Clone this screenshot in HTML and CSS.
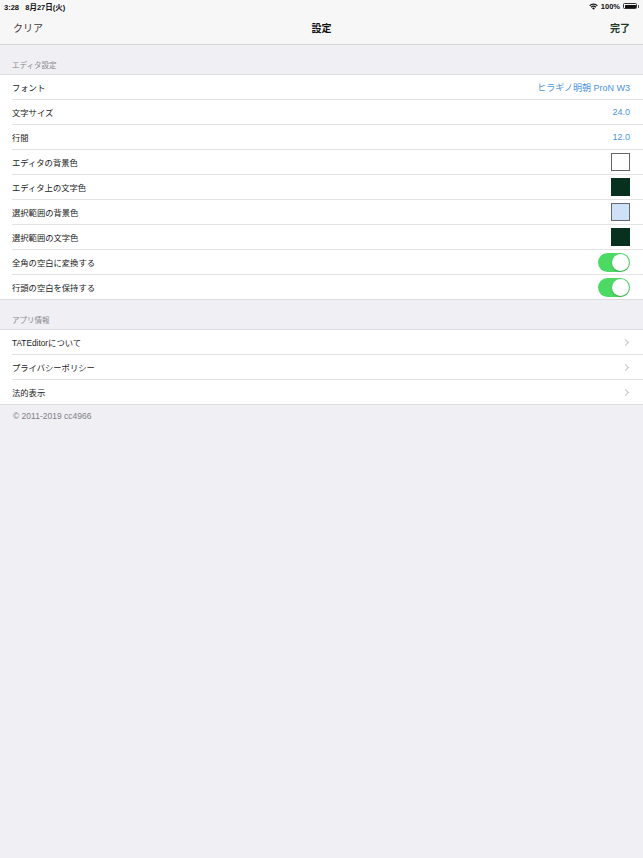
FILE: index.html
```html
<!DOCTYPE html>
<html lang="ja">
<head>
<meta charset="utf-8">
<link rel="stylesheet" href="styles.css">
</head>
<body>
<div class="top">
  <div class="status">
    <span class="time">3:28&nbsp;&nbsp;&nbsp;8月27日(火)</span>
    <span class="status-right">
      <svg class="wifi" width="9" height="7" viewBox="0 0 18 14"><path d="M9 13.5 L6.2 10.5 A4 4 0 0 1 11.8 10.5 Z" fill="#111"/><path d="M3.4 7.6 A8 8 0 0 1 14.6 7.6 L13 9.3 A5.6 5.6 0 0 0 5 9.3 Z" fill="#111"/><path d="M0.5 4.6 A12.2 12.2 0 0 1 17.5 4.6 L15.9 6.3 A9.8 9.8 0 0 0 2.1 6.3 Z" fill="#111"/></svg>
      <span class="pct">100%</span>
      <span class="battery"><span class="battery-fill"></span></span><span class="battery-tip"></span>
    </span>
  </div>
  <div class="nav">
    <span class="nav-left">クリア</span>
    <span class="nav-title">設定</span>
    <span class="nav-right">完了</span>
  </div>
</div>

<div class="section-header">エディタ設定</div>
<div class="group">
  <div class="row"><span class="label">フォント</span><span class="value">ヒラギノ明朝 ProN W3</span></div>
  <div class="row"><span class="label">文字サイズ</span><span class="value">24.0</span></div>
  <div class="row"><span class="label">行間</span><span class="value">12.0</span></div>
  <div class="row"><span class="label">エディタの背景色</span><span class="swatch sw-white"></span></div>
  <div class="row"><span class="label">エディタ上の文字色</span><span class="swatch sw-dark"></span></div>
  <div class="row"><span class="label">選択範囲の背景色</span><span class="swatch sw-blue"></span></div>
  <div class="row"><span class="label">選択範囲の文字色</span><span class="swatch sw-dark"></span></div>
  <div class="row"><span class="label">全角の空白に変換する</span><span class="toggle"><span class="knob"></span></span></div>
  <div class="row last"><span class="label">行頭の空白を保持する</span><span class="toggle"><span class="knob"></span></span></div>
</div>

<div class="section-header">アプリ情報</div>
<div class="group">
  <div class="row"><span class="label">TATEditorについて</span><span class="chev"></span></div>
  <div class="row"><span class="label">プライバシーポリシー</span><span class="chev"></span></div>
  <div class="row last"><span class="label">法的表示</span><span class="chev"></span></div>
</div>
<div class="footer">© 2011-2019 cc4966</div>
</body>
</html>
```

FILE: styles.css
```css
* { box-sizing: border-box; }
html, body {
  margin: 0;
  padding: 0;
  background: #efeff4;
  font-family: "Liberation Sans", "Noto Sans CJK JP", sans-serif;
  color: #1c1c1c;
}
body { width: 643px; min-height: 858px; }

.top {
  background: #f7f7f7;
  border-bottom: 1px solid #d4d4d6;
  height: 45px;
}
.status {
  height: 12px;
  display: flex;
  align-items: center;
  justify-content: space-between;
  padding: 0 4px 0 4px;
  font-size: 7.5px;
  font-weight: bold;
  color: #111;
}
.status-right { display: flex; align-items: center; gap: 2px; }
.wifi { display: block; margin-right: 1px; }
.pct { font-size: 7.5px; }
.battery {
  width: 14px;
  height: 6px;
  border: 1px solid #333;
  border-radius: 1.5px;
  padding: 0.5px;
  display: flex;
  margin-left: 1px;
}
.battery-fill { flex: 1; background: #111; border-radius: 0.5px; }
.battery-tip { width: 1px; height: 3px; background: #555; margin-left: -1px; }

.nav {
  height: 32px;
  display: flex;
  align-items: center;
  justify-content: space-between;
  padding: 0 13px 2px 13px;
  font-size: 10px;
}
.nav-left { color: #3a3a3a; width: 60px; }
.nav-title { font-weight: bold; color: #111; }
.nav-right { color: #1e3b2c; font-weight: bold; width: 60px; text-align: right; }

.section-header {
  height: 29px;
  padding: 0 12px 4px 12px;
  font-size: 7.5px;
  color: #8a8a8f;
  display: flex;
  align-items: flex-end;
}

.group {
  background: #fff;
  border-top: 1px solid #dcdce0;
  border-bottom: 1px solid #dcdce0;
}
.row {
  height: 25px;
  margin-left: 12px;
  padding-right: 13px;
  display: flex;
  align-items: center;
  justify-content: space-between;
  border-bottom: 1px solid #e3e3e6;
  font-size: 8.3px;
}
.row.last { border-bottom: none; height: 24px; }
.label { color: #222; }
.value { color: #4a94dc; font-size: 9px; }

.swatch {
  width: 19px;
  height: 18px;
  border: 1px solid #4c4c4c;
}
.sw-white { background: #fff; border-color: #666; }
.sw-dark { background: #08301f; border-color: #08301f; }
.sw-blue { background: #cfe1f6; border-color: #667; }

.toggle {
  width: 32px;
  height: 19px;
  border-radius: 10px;
  background: #4cd964;
  position: relative;
}
.knob {
  position: absolute;
  right: 1px;
  top: 1px;
  width: 17px;
  height: 17px;
  border-radius: 50%;
  background: #fff;
  box-shadow: 0 1px 1.5px rgba(0,0,0,0.25);
}

.chev {
  width: 5px;
  height: 5px;
  border-top: 1px solid #c4c4c9;
  border-right: 1px solid #c4c4c9;
  transform: rotate(45deg);
  margin-right: 2px;
}

.footer {
  padding: 6px 13px 0 13px;
  font-size: 8.5px;
  color: #7f7f84;
}
```
